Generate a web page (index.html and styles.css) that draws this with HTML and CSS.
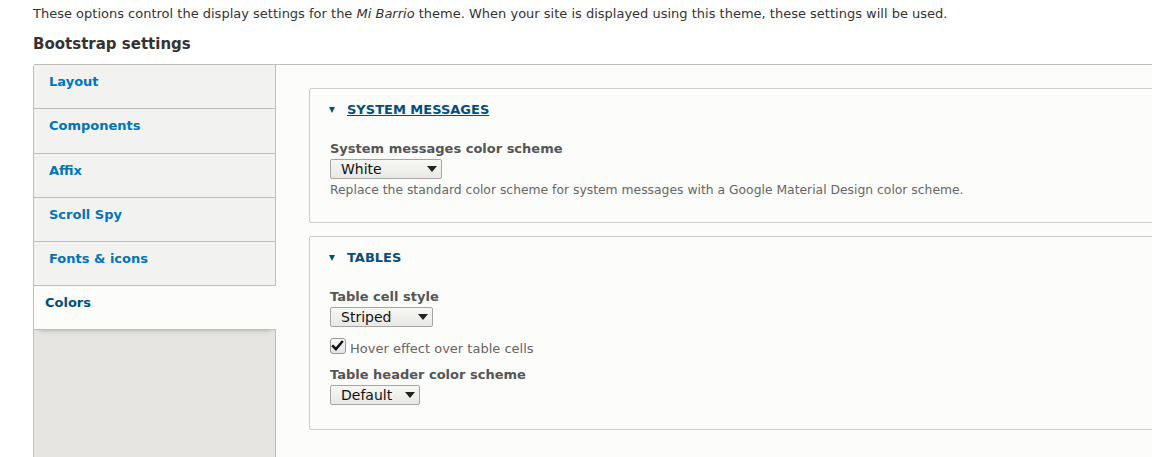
FILE: index.html
```html
<!DOCTYPE html>
<html lang="en">
<head>
<meta charset="utf-8">
<title>Bootstrap settings</title>
<link rel="stylesheet" href="styles.css">
</head>
<body>
<p class="intro">These options control the display settings for the <em>Mi Barrio</em> theme. When your site is displayed using this theme, these settings will be used.</p>
<h2 class="section-title">Bootstrap settings</h2>
<div class="vtabs">
  <ul class="vtabs__menu">
    <li class="vtabs__item"><a href="#">Layout</a></li>
    <li class="vtabs__item vtabs__item--tall"><a href="#">Components</a></li>
    <li class="vtabs__item"><a href="#">Affix</a></li>
    <li class="vtabs__item"><a href="#">Scroll Spy</a></li>
    <li class="vtabs__item"><a href="#">Fonts &amp; icons</a></li>
    <li class="vtabs__item vtabs__item--selected"><a href="#">Colors</a></li>
  </ul>
  <div class="vtabs__pane">
    <details class="box" open>
      <summary class="box__summary"><span class="box__arrow"></span><span class="box__title box__title--focus">System messages</span></summary>
      <div class="box__body">
        <div class="field">
          <label class="field__label">System messages color scheme</label>
          <span class="select select--scheme"><span class="select__value">White</span></span>
          <div class="field__desc">Replace the standard color scheme for system messages with a Google Material Design color scheme.</div>
        </div>
      </div>
    </details>
    <details class="box box--tables" open>
      <summary class="box__summary"><span class="box__arrow"></span><span class="box__title">Tables</span></summary>
      <div class="box__body">
        <div class="field">
          <label class="field__label">Table cell style</label>
          <span class="select select--cell"><span class="select__value">Striped</span></span>
        </div>
        <div class="check">
          <span class="check__box"><svg viewBox="0 0 16 16" width="16" height="16"><path d="M3.2 8.2 L6.3 11.3 L12.8 3.6" fill="none" stroke="#111" stroke-width="2.6" stroke-linecap="square"/></svg></span>
          <span class="check__label">Hover effect over table cells</span>
        </div>
        <div class="field">
          <label class="field__label">Table header color scheme</label>
          <span class="select select--header"><span class="select__value">Default</span></span>
        </div>
      </div>
    </details>
  </div>
</div>
</body>
</html>
```
FILE: styles.css
```css
html, body {
  margin: 0;
  overflow: hidden;
  background: #fff;
}
body {
  font-family: "DejaVu Sans", sans-serif;
  color: #333;
  padding: 0 0 0 33px;
  height: 457px;
}
.intro {
  margin: 0;
  padding-top: 5px;
  font-size: 13px;
  line-height: 18px;
  color: #333;
}
.section-title {
  margin: 11px 0 0;
  font-size: 15px;
  line-height: 20px;
  font-weight: bold;
  color: #333;
}
.vtabs {
  margin-top: 10px;
  width: 1200px;
  height: 600px;
  display: flex;
  border: 1px solid #bfbfba;
  border-radius: 2px 0 0 0;
  background: #fcfcfa;
}
.vtabs__menu {
  list-style: none;
  margin: 0;
  padding: 0;
  width: 241px;
  flex: none;
  background: #e6e5e1;
  border-right: 1px solid #bfbfba;
}
.vtabs__item {
  background: #f2f2f0;
  border-bottom: 1px solid #bfbfba;
  height: 43px;
}
.vtabs__item--tall {
  height: 44px;
}
.vtabs__item a {
  display: block;
  padding: 7px 15px 0 15px;
  font-size: 13px;
  line-height: 20px;
  font-weight: bold;
  color: #0074bd;
  text-decoration: none;
}
.vtabs__item--selected {
  background: #fcfcfa;
  margin-right: -1px;
  position: relative;
  z-index: 1;
  box-shadow: 0 5px 5px -5px rgba(0, 0, 0, 0.3);
}
.vtabs__item--selected a {
  padding-left: 11px;
  color: #004f80;
}
.vtabs__pane {
  flex: 1;
  padding: 23px 0 0 33px;
  background: #fcfcfa;
}
.box {
  border: 1px solid #ccc;
  border-radius: 2px;
  background: #fcfcfa;
  margin-bottom: 13px;
}
.box__summary {
  display: flex;
  align-items: center;
  list-style: none;
  padding: 12px 19px 0;
  height: 17px;
  cursor: pointer;
}
.box__summary::-webkit-details-marker { display: none; }
.box__arrow {
  width: 0;
  height: 0;
  border-left: 3px solid transparent;
  border-right: 3px solid transparent;
  border-top: 6px solid #004f80;
  margin-right: 12px;
}
.box__title {
  font-size: 13px;
  font-weight: bold;
  text-transform: uppercase;
  color: #004f80;
}
.box__title--focus {
  text-decoration: underline;
}
.box__body {
  padding: 22px 20px 23px;
}
.box--tables .box__body {
  padding-bottom: 24px;
}
.field {
  display: flex;
  flex-direction: column;
  align-items: flex-start;
}
.field__label {
  font-size: 13px;
  line-height: 18px;
  font-weight: bold;
  color: #555;
  margin-bottom: 1px;
}
.select {
  position: relative;
  display: block;
  box-sizing: border-box;
  height: 20px;
  border: 1px solid #a6a6a6;
  border-radius: 2px;
  background: linear-gradient(#f7f7f5, #e8e8e4);
  font-size: 14px;
  line-height: 18px;
  color: #111;
  padding-left: 10px;
}
.select::after {
  content: "";
  position: absolute;
  right: 4px;
  top: 6px;
  border-left: 5px solid transparent;
  border-right: 5px solid transparent;
  border-top: 6px solid #222;
}
.select--scheme { width: 112px; }
.select--cell { width: 103px; }
.select--header { width: 90px; }
.field__desc {
  font-size: 12.35px;
  line-height: 18px;
  color: #666;
  margin-top: 2px;
}
.check {
  display: flex;
  align-items: flex-start;
  height: 18px;
  margin: 11px 0 10px;
}
.check__box {
  box-sizing: border-box;
  width: 16px;
  height: 16px;
  border: 1px solid #999;
  border-radius: 3px;
  background: linear-gradient(#fcfcfc, #e4e4e4);
  display: flex;
}
.check__box svg { display: block; margin: -1px 0 0 -1px; }
.check__label {
  font-size: 13px;
  line-height: 15px;
  color: #666;
  margin-left: 4px;
  margin-top: 3px;
}
```
